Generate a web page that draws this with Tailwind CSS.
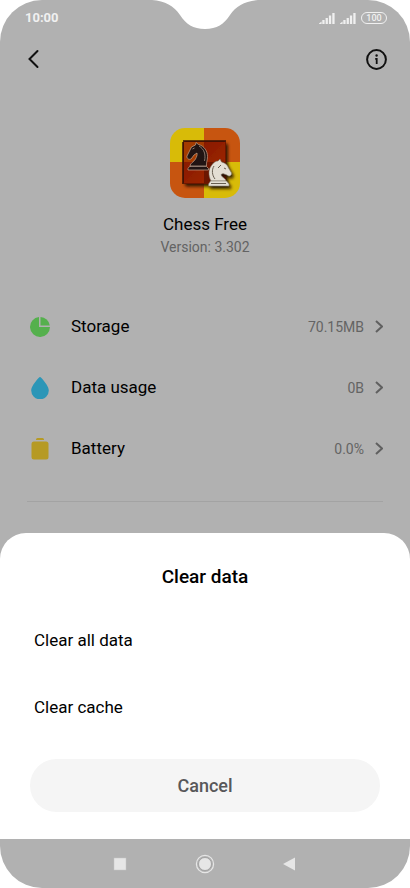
<!DOCTYPE html>
<html lang="en">
<head>
<meta charset="utf-8">
<meta name="viewport" content="width=device-width, initial-scale=1">
<title>App info</title>
<script src="https://cdn.jsdelivr.net/npm/@tailwindcss/browser@4"></script>
</head>
<body class="bg-white font-['Roboto',sans-serif] text-black">
<div class="relative flex min-h-screen flex-col overflow-hidden rounded-[42px] bg-[#b1b1b1]">
  <svg class="absolute left-1/2 top-0 -translate-x-1/2" width="106" height="30" viewBox="0 0 106 30" aria-hidden="true"><path fill="#fff" d="M0 0C13 1 22 6 28 15C34 24 41 29 53 29S72 24 78 15C84 6 93 1 106 0Z"/></svg>

  <div class="flex h-9 items-center justify-between pl-[25px] pr-[23px] text-[#f0f0f0]">
    <span class="text-[13px] font-bold">10:00</span>
    <div class="flex items-center gap-[5px]">
      <svg width="16" height="12" viewBox="0 0 16 12" fill="currentColor" aria-hidden="true"><path d="M0 11.500 2.600 9.500V12H0zM3.300 8h2.300v4H3.300zM6.600 6h2.300v6H6.600zM9.900 3.500h2.300V12H9.900zM13.300 1h2.300v11h-2.300z"/></svg>
      <svg width="16" height="12" viewBox="0 0 16 12" fill="currentColor" aria-hidden="true"><path d="M0 11.500 2.600 9.500V12H0zM3.300 8h2.300v4H3.300zM6.600 6h2.300v6H6.600zM9.900 3.500h2.300V12H9.900zM13.300 1h2.300v11h-2.300z"/></svg>
      <span class="flex h-3 w-[26px] items-center justify-center rounded-full border border-[#f0f0f0] text-[9px] leading-none font-medium">100</span>
    </div>
  </div>

  <header class="flex h-[46px] items-center justify-between pl-[26px] pr-[22px] text-[#111]">
    <button type="button" aria-label="Back"><svg width="16" height="20" viewBox="0 0 16 20" fill="none" stroke="currentColor" stroke-width="2" stroke-linecap="round"><path d="M11.500 2 3.500 10l8 8"/></svg></button>
    <button type="button" aria-label="Information"><svg width="23" height="23" viewBox="0 0 23 23" fill="none" stroke="currentColor" stroke-width="2"><circle cx="11.500" cy="11.500" r="9.400"/><path stroke-width="1.800" d="M10.200 10.800h1.500v5.200"/><circle cx="11.600" cy="7.500" r="1.200" fill="currentColor" stroke="none"/></svg></button>
  </header>

  <main class="px-[27px]">
    <section class="flex flex-col items-center pt-[46px]">
      <svg width="70" height="70" viewBox="0 0 70 70" role="img" aria-label="Chess Free">
        <defs>
          <clipPath id="tile"><rect width="70" height="70" rx="15"/></clipPath>
          <filter id="shade" x="-30%" y="-30%" width="160%" height="160%"><feDropShadow dx="2" dy="2.5" stdDeviation="1.5" flood-color="#201000" flood-opacity=".9"/></filter>
          <linearGradient id="red" x2="1" y2="1"><stop stop-color="#7f1303"/><stop offset="1" stop-color="#a52c05"/></linearGradient>
        </defs>
        <g clip-path="url(#tile)">
          <path fill="#d8bb08" d="M0 0h34v34H0zM34 34h36v36H34z"/>
          <path fill="#c75510" d="M34 0h36v34H34zM0 34h34v36H0z"/>
          <g filter="url(#shade)">
            <rect x="13" y="13" width="43" height="43" rx="2" fill="#6c1406"/>
            <path fill="#a43b06" d="M14 14h20v20H14z"/><path fill="url(#red)" d="M34 14h21v20H34zM14 34h20v21H14z"/>
          </g>
          <path d="M13 14v42M13 13h43" stroke="#351006" stroke-width="1.500"/>
          <g fill="#201413" stroke="#c3a58c" stroke-width=".7">
            <path d="M20 38c0-3 4-4 5.500-7 1-2 2-4 1.500-6l-3 2-3 4c-2 1-4.500-.5-4-3l2.500-5 2-4 4-2 .5-2.500 2.500 2c6 1.500 9 7 9 12 0 4-1.500 6.500-1 9.500z"/>
            <path d="M19.500 38.500h17l2 2v1.500H18v-1.500z"/>
          </g>
          <path d="M29 18c5 3 7 8 5.500 15M22.500 21l2-1M21 38.500h15" stroke="#8b776c" stroke-width="1" fill="none"/>
          <g filter="url(#shade)" fill="#e4dfd4" stroke="#756b5b" stroke-width=".5">
            <path d="M41 53c-3-6-2.500-12 .5-15.500 2-3 4-4.500 6.500-4.500l2-2 1.500 3c4 1 6 3 7 6l3 5c0 3-2.500 4-4.500 2l-4-1.500-2 1c0 3 5 3.500 5 6.500z"/>
            <path d="M40.500 53h16l2.500 3v2H38.500v-2z"/>
          </g>
          <path d="M44 38c-2.500 4-2 9 1 13M51 37l-3 3M54 40l2 1M41 55.500h15" stroke="#685f51" stroke-width="1" fill="none"/>
        </g>
      </svg>
      <h1 class="mt-[14px] text-[17px] leading-6">Chess Free</h1>
      <p class="mt-px text-sm leading-5 text-[#636363]">Version: 3.302</p>
    </section>

    <nav class="mt-[39px] flex flex-col pb-[22px]" aria-label="App details">
      <a href="#storage" class="flex h-[61px] items-center">
        <svg class="ml-[3px]" width="20" height="22" viewBox="0 0 20 22" aria-hidden="true"><path fill="#55b04d" d="M9 1v10h11A10 10 0 1 1 9 1z"/><path fill="#55b04d" d="M10.500 1a10 10 0 0 1 9.300 8.500h-9.300z"/></svg>
        <span class="ml-[21px] flex-1 text-[17px]">Storage</span><span class="text-sm text-[#646464]">70.15MB</span>
        <svg class="ml-[10px]" width="9" height="16" viewBox="0 0 9 16" fill="none" stroke="#606060" stroke-width="2" aria-hidden="true"><path d="M2 2l6 5.500L2 13"/></svg>
      </a>
      <a href="#data" class="flex h-[61px] items-center">
        <svg class="ml-[3px]" width="20" height="22" viewBox="0 0 20 22" aria-hidden="true"><path fill="#2c96b7" d="M8.800.7c.7-.8 1.700-.8 2.400 0C15 5 18.800 9.500 18.800 13.500a8.800 8.800 0 0 1-17.600 0C1.200 9.500 5 5 8.800.7z"/></svg>
        <span class="ml-[21px] flex-1 text-[17px]">Data usage</span><span class="text-sm text-[#646464]">0B</span>
        <svg class="ml-[10px]" width="9" height="16" viewBox="0 0 9 16" fill="none" stroke="#606060" stroke-width="2" aria-hidden="true"><path d="M2 2l6 5.500L2 13"/></svg>
      </a>
      <a href="#battery" class="flex h-[61px] items-center">
        <svg class="ml-[3px]" width="20" height="22" viewBox="0 0 20 22" fill="#b69a24" aria-hidden="true"><path d="M6 1.500Q6 0 7.500 0h5Q14 0 14 1.500V2H6z"/><rect x="1.500" y="3.500" width="17" height="18" rx="2.500"/></svg>
        <span class="ml-[21px] flex-1 text-[17px]">Battery</span><span class="text-sm text-[#646464]">0.0%</span>
        <svg class="ml-[10px]" width="9" height="16" viewBox="0 0 9 16" fill="none" stroke="#606060" stroke-width="2" aria-hidden="true"><path d="M2 2l6 5.500L2 13"/></svg>
      </a>
    </nav>
    <hr class="border-[#a3a3a3]">
  </main>

  <section role="dialog" aria-labelledby="sheet-title" class="mt-auto rounded-t-[26px] bg-white px-[30px] pt-8 pb-[27px]">
    <h2 id="sheet-title" class="mb-[18px] text-center text-[19px] leading-6 font-medium">Clear data</h2>
    <button type="button" class="block h-[67px] w-full px-1 text-left text-[17px]">Clear all data</button>
    <button type="button" class="block h-[67px] w-full px-1 text-left text-[17px]">Clear cache</button>
    <button type="button" class="mt-[18px] block h-[53px] w-full rounded-full bg-[#f5f5f5] text-lg font-medium text-[#58585a]">Cancel</button>
  </section>

  <footer class="flex h-[49px] items-center justify-center gap-[66px] text-[#e6e6e6]">
    <button type="button" aria-label="Recent apps"><svg width="18" height="18" viewBox="0 0 18 18"><rect x="3" y="3" width="12" height="12" fill="currentColor" stroke="#c6c6c6" stroke-width=".5"/></svg></button>
    <button type="button" aria-label="Home"><svg width="20" height="20" viewBox="0 0 20 20"><circle cx="10" cy="10" r="8.600" fill="none" stroke="currentColor" stroke-width="1.200"/><circle cx="10" cy="10" r="6.500" fill="currentColor" stroke="#929292" stroke-width=".7"/></svg></button>
    <button type="button" aria-label="Back"><svg width="18" height="18" viewBox="0 0 18 18"><path d="M14 2.500v13L2 9z" fill="currentColor"/></svg></button>
  </footer>
</div>
</body>
</html>
